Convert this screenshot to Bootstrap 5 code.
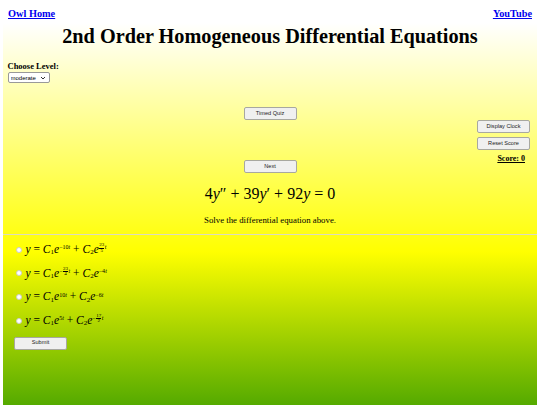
<!DOCTYPE html>
<html lang="en">
<head>
<meta charset="utf-8">
<title>2nd Order Homogeneous Differential Equations</title>
<link href="https://cdn.jsdelivr.net/npm/bootstrap@5.3.0/dist/css/bootstrap.min.css" rel="stylesheet">
<style>
html, body { height: 405px; overflow: hidden; }
body { font-family: "Liberation Serif", serif; color: #000; font-size: 9px; line-height: 1.15; background: #fff; }
.tophead { height: 23px; padding: 8px 8px 0; }
.toplink { font-size: 10.3px; font-weight: 700; color: #0000ee; }
.gradpanel { margin: 0 3px; height: 382px; overflow: hidden; background: linear-gradient(#fff, #ff0, #008000) no-repeat top / 100% 458px; }
.pagehead { font-size: 20.25px; font-weight: 700; line-height: 26px; margin: 0; color: #000; }
.levelbox { padding: 12px 0 0 4.5px; height: 58px; }
.levellabel { font-size: 8.5px; font-weight: 700; display: block; margin: 0; line-height: 11px; }
.levelpick { font: 6px "Liberation Sans", sans-serif; width: 42px; height: 11px; padding: 0 0 0 2px; border: 1px solid #999; border-radius: 2px; display: block; appearance: none;
  background: #fff url("data:image/svg+xml,%3Csvg xmlns='http://www.w3.org/2000/svg' width='6' height='4'%3E%3Cpath d='M1 1l2 2 2-2' fill='none' stroke='%23333' stroke-width='1'/%3E%3C/svg%3E") no-repeat right 3px center; }
.plainbtn { font: 5.6px/1 "Liberation Sans", sans-serif; color: #222; background: #f0f0f0; border: 1px solid #a8a8a0; border-radius: 2px; width: 53px; height: 13px; padding: 0; }
.midgrid { display: grid; grid-template-columns: 1fr auto 1fr; }
.midcol { height: 66px; }
.sidecol { padding: 13px 7px 0 0; }
.scoreline { font-size: 8px; font-weight: 700; text-decoration: underline; padding-right: 5px; line-height: 9px; }
.mathmain { font-size: 16px; line-height: 20px; margin-top: 11px; text-align: center; }
.taskline { font-size: 8.8px; line-height: 11px; margin-top: 11px; text-align: center; }
.splitline { height: 1px; background: #dcdcc0; margin-top: 8px; }
.optlist { padding: 3px 0 0 13px; }
.optline { height: 23.6px; font-size: 11.5px; white-space: nowrap; gap: 3.5px; }
.optline input { width: 6px; height: 6px; margin: 0; appearance: none; background: #fff; border: .5px solid #ccc; border-radius: 50%; }
.optline sub { font-size: 7px; bottom: -.2em; }
.optline sup { font-size: 6px; top: -.6em; }
.tinyfrac { display: inline-flex; flex-direction: column; vertical-align: middle; font-size: 5px; line-height: 4.5px; text-align: center; margin: 0 .5px; }
.tinyfrac b { font-weight: 400; border-bottom: .5px solid #000; }
.tinyfrac em { font-style: normal; }
.submitwrap { padding: 4px 0 0 11px; }
</style>
</head>
<body>
<header class="tophead d-flex justify-content-between">
  <a class="toplink" href="#">Owl Home</a>
  <a class="toplink" href="#">YouTube</a>
</header>
<main class="gradpanel">
  <h1 class="pagehead text-center">2nd Order Homogeneous Differential Equations</h1>
  <section class="levelbox">
    <label class="levellabel" for="lvl">Choose Level:</label>
    <select class="levelpick" id="lvl"><option>moderate</option></select>
  </section>
  <section class="midgrid">
    <div></div>
    <div class="midcol d-flex flex-column justify-content-between">
      <button class="plainbtn" type="button">Timed Quiz</button>
      <button class="plainbtn" type="button">Next</button>
    </div>
    <div class="sidecol d-flex flex-column align-items-end">
      <button class="plainbtn mb-1" type="button">Display Clock</button>
      <button class="plainbtn mb-1" type="button">Reset Score</button>
      <div class="scoreline">Score: 0</div>
    </div>
  </section>
  <div class="mathmain">4<i>y</i>″ + 39<i>y</i>′ + 92<i>y</i> = 0</div>
  <p class="taskline mb-0">Solve the differential equation above.</p>
  <div class="splitline"></div>
  <form class="optlist">
    <label class="optline d-flex align-items-center"><input type="radio" name="a"><span><i>y</i> = <i>C</i><sub>1</sub><i>e</i><sup>−10<i>t</i></sup> + <i>C</i><sub>2</sub><i>e</i><sup><span class="tinyfrac"><b>23</b><em>5</em></span><i>t</i></sup></span></label>
    <label class="optline d-flex align-items-center"><input type="radio" name="a"><span><i>y</i> = <i>C</i><sub>1</sub><i>e</i><sup>−<span class="tinyfrac"><b>23</b><em>4</em></span><i>t</i></sup> + <i>C</i><sub>2</sub><i>e</i><sup>−4<i>t</i></sup></span></label>
    <label class="optline d-flex align-items-center"><input type="radio" name="a"><span><i>y</i> = <i>C</i><sub>1</sub><i>e</i><sup>10<i>t</i></sup> + <i>C</i><sub>2</sub><i>e</i><sup>−6<i>t</i></sup></span></label>
    <label class="optline d-flex align-items-center"><input type="radio" name="a"><span><i>y</i> = <i>C</i><sub>1</sub><i>e</i><sup>5<i>t</i></sup> + <i>C</i><sub>2</sub><i>e</i><sup>−<span class="tinyfrac"><b>17</b><em>2</em></span><i>t</i></sup></span></label>
  </form>
  <div class="submitwrap"><button class="plainbtn" type="button">Submit</button></div>
</main>
<script src="https://cdn.jsdelivr.net/npm/bootstrap@5.3.0/dist/js/bootstrap.bundle.min.js"></script>
</body>
</html>
